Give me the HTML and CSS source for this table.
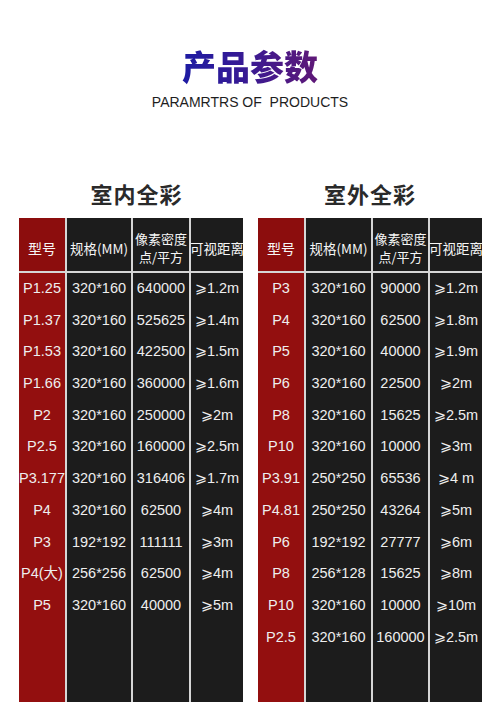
FILE: index.html
```html
<!DOCTYPE html>
<html lang="zh-CN">
<head>
<meta charset="utf-8">
<title>产品参数</title>
<link rel="stylesheet" href="styles.css">
</head>
<body>
<div class="page">
  <header class="hero">
    <h1 class="title">产品参数</h1>
    <p class="sub">PARAMRTRS OF&nbsp; PRODUCTS</p>
  </header>
  <div class="panels">
    <section class="panel panel-in">
      <h2 class="panel-title">室内全彩</h2>
      <div class="table table-in">
        <div class="th th-red">型号</div>
        <div class="th">规格(MM)</div>
        <div class="th th-2l"><span class="ln">像素密度</span><span class="ln">点/平方</span></div>
        <div class="th">可视距离</div>
        <div class="td td-red">
          <div class="c">P1.25</div><div class="c">P1.37</div><div class="c">P1.53</div><div class="c">P1.66</div><div class="c">P2</div><div class="c">P2.5</div><div class="c">P3.177</div><div class="c">P4</div><div class="c">P3</div><div class="c">P4(大)</div><div class="c">P5</div>
        </div>
        <div class="td">
          <div class="c">320*160</div><div class="c">320*160</div><div class="c">320*160</div><div class="c">320*160</div><div class="c">320*160</div><div class="c">320*160</div><div class="c">320*160</div><div class="c">320*160</div><div class="c">192*192</div><div class="c">256*256</div><div class="c">320*160</div>
        </div>
        <div class="td">
          <div class="c">640000</div><div class="c">525625</div><div class="c">422500</div><div class="c">360000</div><div class="c">250000</div><div class="c">160000</div><div class="c">316406</div><div class="c">62500</div><div class="c">111111</div><div class="c">62500</div><div class="c">40000</div>
        </div>
        <div class="td">
          <div class="c">⩾1.2m</div><div class="c">⩾1.4m</div><div class="c">⩾1.5m</div><div class="c">⩾1.6m</div><div class="c">⩾2m</div><div class="c">⩾2.5m</div><div class="c">⩾1.7m</div><div class="c">⩾4m</div><div class="c">⩾3m</div><div class="c">⩾4m</div><div class="c">⩾5m</div>
        </div>
      </div>
    </section>
    <section class="panel panel-out">
      <h2 class="panel-title">室外全彩</h2>
      <div class="table table-out">
        <div class="th th-red">型号</div>
        <div class="th">规格(MM)</div>
        <div class="th th-2l"><span class="ln">像素密度</span><span class="ln">点/平方</span></div>
        <div class="th">可视距离</div>
        <div class="td td-red">
          <div class="c">P3</div><div class="c">P4</div><div class="c">P5</div><div class="c">P6</div><div class="c">P8</div><div class="c">P10</div><div class="c">P3.91</div><div class="c">P4.81</div><div class="c">P6</div><div class="c">P8</div><div class="c">P10</div><div class="c">P2.5</div>
        </div>
        <div class="td">
          <div class="c">320*160</div><div class="c">320*160</div><div class="c">320*160</div><div class="c">320*160</div><div class="c">320*160</div><div class="c">320*160</div><div class="c">250*250</div><div class="c">250*250</div><div class="c">192*192</div><div class="c">256*128</div><div class="c">320*160</div><div class="c">320*160</div>
        </div>
        <div class="td">
          <div class="c">90000</div><div class="c">62500</div><div class="c">40000</div><div class="c">22500</div><div class="c">15625</div><div class="c">10000</div><div class="c">65536</div><div class="c">43264</div><div class="c">27777</div><div class="c">15625</div><div class="c">10000</div><div class="c">160000</div>
        </div>
        <div class="td">
          <div class="c">⩾1.2m</div><div class="c">⩾1.8m</div><div class="c">⩾1.9m</div><div class="c">⩾2m</div><div class="c">⩾2.5m</div><div class="c">⩾3m</div><div class="c">⩾4 m</div><div class="c">⩾5m</div><div class="c">⩾6m</div><div class="c">⩾8m</div><div class="c">⩾10m</div><div class="c">⩾2.5m</div>
        </div>
      </div>
    </section>
  </div>
</div>
</body>
</html>
```
FILE: styles.css
```css
html, body {
  margin: 0;
  padding: 0;
  background: #ffffff;
}
.page {
  width: 500px;
  height: 711px;
  overflow: hidden;
  font-family: "Liberation Sans", "Noto Sans CJK SC", "DejaVu Sans", sans-serif;
}
.hero {
  padding-top: 46px;
  text-align: center;
}
.title {
  margin: 0;
  font-family: "Noto Sans CJK SC", sans-serif;
  font-weight: 900;
  font-size: 34px;
  line-height: 40px;
  display: inline-block;
  background: linear-gradient(90deg, #1d1ba3 0%, #3a1a92 50%, #5f1877 100%);
  -webkit-background-clip: text;
  background-clip: text;
  color: transparent;
}
.sub {
  margin: 6px 0 0;
  font-size: 14px;
  line-height: 20px;
  color: #1e1e1e;
}
.panels {
  display: flex;
  gap: 15px;
  padding-left: 19px;
  margin-top: 66px;
}
.panel {
  width: 224px;
  display: flex;
  flex-direction: column;
}
.panel-title {
  margin: 0 0 10px;
  font-family: "Noto Sans CJK SC", sans-serif;
  font-weight: 700;
  font-size: 22px;
  line-height: 30px;
  letter-spacing: 1px;
  color: #2a2a2a;
  text-align: center;
}
.panel-in .panel-title {
  padding-left: 11px;
}
.table {
  display: grid;
  grid-template-rows: 53px 429px;
  gap: 2px;
  background: #d6d6d6;
}
.table-in {
  grid-template-columns: 46px 64px 56px 52px;
}
.table-out {
  grid-template-columns: 46px 65px 55px 52px;
}
.th {
  background: #1c1c1c;
  color: #f6f6f6;
  font-family: "Noto Sans CJK SC", sans-serif;
  font-size: 13.5px;
  line-height: 18px;
  display: flex;
  flex-direction: column;
  align-items: center;
  justify-content: center;
  text-align: center;
  white-space: nowrap;
  padding-top: 7px;
  box-sizing: border-box;
}
.th-2l {
  font-size: 13px;
  line-height: 18px;
  padding-top: 6px;
}
.ln {
  display: block;
}
.th-red {
  background: #8c0d0d;
  font-size: 14px;
}
.td {
  background: #1c1c1c;
  color: #eeeeee;
  font-size: 14.5px;
}
.td-red {
  background: #930f0f;
}
.c {
  height: 31.7px;
  line-height: 31.7px;
  text-align: center;
  white-space: nowrap;
}
```
